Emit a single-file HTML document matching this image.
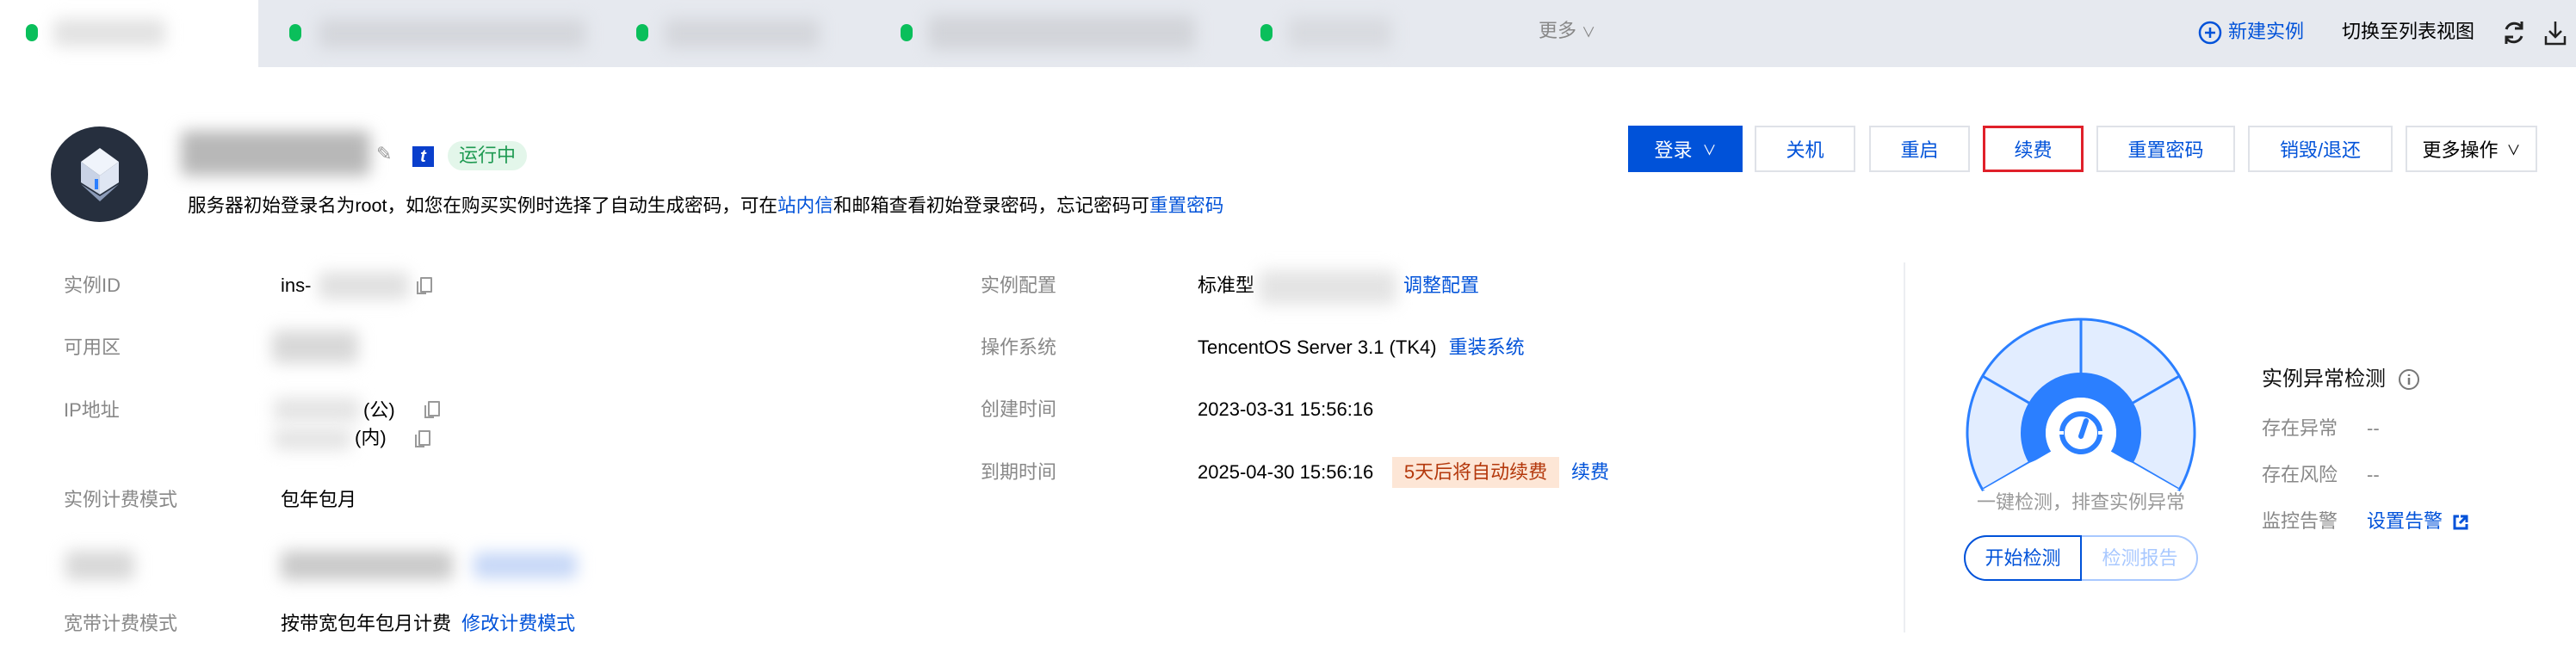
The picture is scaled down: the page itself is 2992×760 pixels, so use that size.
<!DOCTYPE html>
<html><head><meta charset="utf-8"><style>
*{margin:0;padding:0;box-sizing:border-box}
body{width:2992px;height:760px;background:#fff;position:relative;overflow:hidden;font-family:"Liberation Sans","Noto Sans CJK SC",sans-serif;font-size:22px;color:#000}
.a{position:absolute;white-space:nowrap;line-height:1}
.blur{position:absolute;background:#d6d8db;filter:blur(9px);border-radius:6px}
.lbl{color:#888}
.lnk{color:#0052d9}
.btn{position:absolute;top:146px;height:54px;border:2px solid #dfe2e8;background:#fff;color:#0052d9;display:flex;align-items:center;justify-content:center;font-size:22px}
.dot{position:absolute;width:14px;height:20px;border-radius:7px;background:#0abf5b;top:28px}
.cp{position:absolute;width:16px;height:20px}
.cp:before{content:"";position:absolute;left:0;top:5px;width:9px;height:13px;border:2px solid #999;border-top:none;border-right:none}
.cp:after{content:"";position:absolute;left:4px;top:0;width:10px;height:14px;border:2px solid #999;border-radius:1px}
</style></head><body>
<div style="position:absolute;left:0;top:0;width:2992px;height:78px;background:#e6e9ef"></div>
<div style="position:absolute;left:0;top:0;width:300px;height:78px;background:#fff"></div>
<div class="dot" style="left:30px"></div><div class="blur" style="left:62px;top:22px;width:130px;height:32px;background:#e2e2e2"></div>
<div class="dot" style="left:336px"></div><div class="blur" style="left:370px;top:22px;width:310px;height:34px;background:#d4d6db"></div>
<div class="dot" style="left:739px"></div><div class="blur" style="left:772px;top:22px;width:180px;height:34px;background:#d4d6db"></div>
<div class="dot" style="left:1046px"></div><div class="blur" style="left:1078px;top:18px;width:310px;height:40px;background:#d2d4d9"></div>
<div class="dot" style="left:1464px"></div><div class="blur" style="left:1496px;top:20px;width:120px;height:36px;background:#d8dadf"></div>
<div class="a" style="left:1787px;top:25px;color:#888;font-size:22px">更多 <span style="font-size:16px">∨</span></div>
<svg class="a" style="left:2553px;top:24px" width="28" height="28" viewBox="0 0 28 28"><circle cx="14" cy="14" r="12" fill="none" stroke="#0052d9" stroke-width="2.5"/><path d="M14 8v12M8 14h12" stroke="#0052d9" stroke-width="2.5"/></svg>
<div class="a lnk" style="left:2588px;top:26px;font-size:22px">新建实例</div>
<div class="a" style="left:2720px;top:26px;font-size:22px;color:#000">切换至列表视图</div>
<svg class="a" style="left:2905px;top:22px" width="30" height="32" viewBox="0 0 30 32"><path d="M24 10A10 10 0 0 0 6 12M6 22A10 10 0 0 0 24 20" fill="none" stroke="#222" stroke-width="3"/><path d="M24 3v8h-8M6 29v-8h8" fill="none" stroke="#222" stroke-width="3"/></svg>
<svg class="a" style="left:2954px;top:22px" width="28" height="32" viewBox="0 0 28 32"><path d="M14 3v18M7 14l7 7 7-7M3 20v9h22v-9" fill="none" stroke="#222" stroke-width="2.5"/></svg>

<div style="position:absolute;left:59px;top:147px;width:113px;height:111px;border-radius:50%;background:#262f3e"></div>
<svg class="a" style="left:82px;top:168px" width="68" height="70" viewBox="0 0 68 70"><path d="M34 4L56 20 34 36 12 20Z" fill="#f0f4fb"/><path d="M12 20L34 36V58L12 44Z" fill="#c9d3e6"/><path d="M56 20L34 36V58L56 44Z" fill="#dfe6f3"/><path d="M12 46L34 60 56 46 34 66Z" fill="#8c9bb8"/><rect x="28" y="40" width="4" height="12" fill="#2b7fff"/></svg>
<div class="blur" style="left:210px;top:152px;width:220px;height:52px;background:#b8b8b8"></div>
<div class="a" style="left:437px;top:168px;color:#999;font-size:22px">✎</div>
<div class="a" style="left:479px;top:170px;width:25px;height:24px;background:#0a3fcc;color:#fff;font-weight:bold;font-size:20px;text-align:center;line-height:24px;font-style:italic">t</div>
<div class="a" style="left:520px;top:164px;width:92px;height:34px;border-radius:17px;background:#e3f6ea;color:#1f9a52;font-size:22px;line-height:34px;text-align:center">运行中</div>
<div class="a" style="left:218px;top:228px;font-size:21.6px">服务器初始登录名为root，如您在购买实例时选择了自动生成密码，可在<span class="lnk">站内信</span>和邮箱查看初始登录密码，忘记密码可<span class="lnk">重置密码</span></div>

<div class="btn" style="left:1891px;width:133px;background:#0052d9;border-color:#0052d9;color:#fff">登录 <span style="font-size:16px;margin-left:12px">∨</span></div>
<div class="btn" style="left:2038px;width:117px">关机</div>
<div class="btn" style="left:2171px;width:117px">重启</div>
<div class="btn" style="left:2303px;width:117px;border:3px solid #e0202a">续费</div>
<div class="btn" style="left:2435px;width:161px">重置密码</div>
<div class="btn" style="left:2611px;width:168px">销毁/退还</div>
<div class="btn" style="left:2794px;width:153px;color:#000">更多操作 <span style="font-size:16px;margin-left:10px">∨</span></div>

<div class="a lbl" style="left:74px;top:321px">实例ID</div>
<div class="a" style="left:326px;top:321px">ins-</div>
<div class="blur" style="left:370px;top:316px;width:105px;height:32px;background:#e0e0e0"></div>
<div class="cp" style="left:484px;top:322px"></div>
<div class="a lbl" style="left:74px;top:393px">可用区</div>
<div class="blur" style="left:316px;top:384px;width:100px;height:38px;background:#d8d8d8"></div>
<div class="a lbl" style="left:74px;top:466px">IP地址</div>
<div class="blur" style="left:318px;top:462px;width:100px;height:28px;background:#e4e4e4"></div>
<div class="a" style="left:422px;top:466px">(公)</div><div class="cp" style="left:493px;top:466px"></div>
<div class="blur" style="left:318px;top:497px;width:90px;height:26px;background:#e4e4e4"></div>
<div class="a" style="left:412px;top:498px">(内)</div><div class="cp" style="left:482px;top:500px"></div>
<div class="a lbl" style="left:74px;top:570px">实例计费模式</div>
<div class="a" style="left:326px;top:570px">包年包月</div>
<div class="blur" style="left:76px;top:640px;width:80px;height:34px;background:#d8d8d8"></div>
<div class="blur" style="left:326px;top:640px;width:200px;height:34px;background:#cacaca"></div>
<div class="blur" style="left:550px;top:642px;width:120px;height:30px;background:#c6d7f7"></div>
<div class="a lbl" style="left:74px;top:714px">宽带计费模式</div>
<div class="a" style="left:326px;top:714px">按带宽包年包月计费 <span class="lnk" style="margin-left:6px">修改计费模式</span></div>

<div class="a lbl" style="left:1139px;top:321px">实例配置</div>
<div class="a" style="left:1391px;top:321px">标准型</div>
<div class="blur" style="left:1462px;top:314px;width:160px;height:40px;background:#e4e4e4"></div>
<div class="a lnk" style="left:1630px;top:321px">调整配置</div>
<div class="a lbl" style="left:1139px;top:393px">操作系统</div>
<div class="a" style="left:1391px;top:393px">TencentOS Server 3.1 (TK4) <span class="lnk" style="margin-left:8px">重装系统</span></div>
<div class="a lbl" style="left:1139px;top:465px">创建时间</div>
<div class="a" style="left:1391px;top:465px">2023-03-31 15:56:16</div>
<div class="a lbl" style="left:1139px;top:538px">到期时间</div>
<div class="a" style="left:1391px;top:538px">2025-04-30 15:56:16</div>
<div class="a" style="left:1617px;top:531px;width:194px;height:36px;background:#fde6d6;color:#b4380c;line-height:36px;text-align:center">5天后将自动续费</div>
<div class="a lnk" style="left:1825px;top:538px">续费</div>

<div style="position:absolute;left:2211px;top:305px;width:2px;height:430px;background:#eceef2"></div>

<svg class="a" style="left:2277px;top:363px" width="280" height="220" viewBox="-140 -140 280 220">
<path d="M-114.3 66A132 132 0 1 1 114.3 66L0 0Z" fill="#e2edff" stroke="#2b7fff" stroke-width="3"/>
<path d="M-114.3 66L0 0 114.3 66Z" fill="#fff"/>
<path d="M0 -132V0M-114.3 -66L0 0M114.3 -66L0 0" stroke="#2b7fff" stroke-width="3"/>
<path d="M-60.6 35A70 70 0 1 1 60.6 35L35.5 20.5A41 41 0 1 0 -35.5 20.5Z" fill="#2b7fff"/>
<path d="M-114.3 66L-35 20M114.3 66L35 20" stroke="#2b7fff" stroke-width="3"/>
<path d="M-114.3 66L-60 35 0 10 60 35 114.3 66Z" fill="#fff"/>
<circle cx="0" cy="0" r="41" fill="#fff"/>
<circle cx="0" cy="0" r="22" fill="none" stroke="#2b7fff" stroke-width="6"/>
<path d="M-26 0h6M20 0h6" stroke="#fff" stroke-width="4"/>
<path d="M0 4L6 -14" stroke="#2b7fff" stroke-width="6" stroke-linecap="round"/>
</svg>
<div class="a" style="left:2417px;top:573px;transform:translateX(-50%);color:#999">一键检测，排查实例异常</div>
<div class="a" style="left:2281px;top:622px;width:272px;height:53px;border:2px solid #a8c8ff;border-radius:27px"></div>
<div class="a" style="left:2281px;top:622px;width:137px;height:53px;border:2px solid #0052d9;border-radius:27px 0 0 27px;color:#0052d9;line-height:49px;text-align:center">开始检测</div>
<div class="a" style="left:2418px;top:622px;width:135px;height:53px;color:#a8c8ff;line-height:53px;text-align:center">检测报告</div>

<div class="a" style="left:2627px;top:429px;font-size:24px;color:#111">实例异常检测</div>
<svg class="a" style="left:2785px;top:428px" width="26" height="26" viewBox="0 0 26 26"><circle cx="13" cy="13" r="11" fill="none" stroke="#777" stroke-width="2"/><path d="M13 11v8M13 7v2" stroke="#777" stroke-width="2.5"/></svg>
<div class="a lbl" style="left:2627px;top:487px">存在异常</div><div class="a lbl" style="left:2749px;top:487px">--</div>
<div class="a lbl" style="left:2627px;top:541px">存在风险</div><div class="a lbl" style="left:2749px;top:541px">--</div>
<div class="a lbl" style="left:2627px;top:595px">监控告警</div><div class="a lnk" style="left:2749px;top:595px">设置告警</div>
<svg class="a" style="left:2848px;top:597px" width="20" height="20" viewBox="0 0 20 20"><path d="M8 3H3v14h14v-5" fill="none" stroke="#0052d9" stroke-width="3"/><path d="M10 3h7v7M17 3L9 11" fill="none" stroke="#0052d9" stroke-width="3"/></svg>
</body></html>
